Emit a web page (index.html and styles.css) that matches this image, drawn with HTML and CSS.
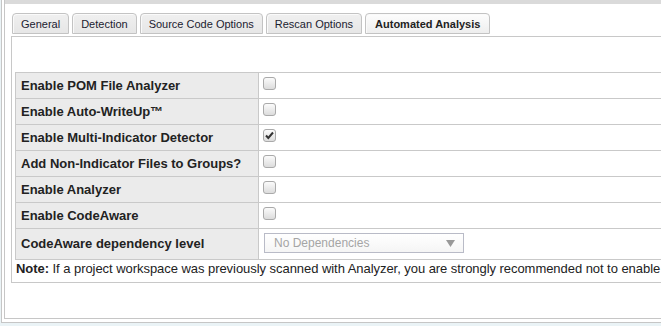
FILE: index.html
```html
<!DOCTYPE html>
<html>

<head>
	<meta http-equiv="Content-Type" content="text/html; charset=utf-8" />
	<title>Automated Analysis</title>
	<link rel="stylesheet" href="styles.css">
</head>

<body>
	<div class="frame">
		<div class="inner">
			<div class="topband"></div>
			<ul class="tabs">
				<li>General</li>
				<li>Detection</li>
				<li>Source Code Options</li>
				<li>Rescan Options</li>
				<li class="active">Automated Analysis</li>
			</ul>
			<div class="panel">
				<table class="opts">
					<tr>
						<th>Enable POM File Analyzer</th>
						<td><span class="cb"></span></td>
					</tr>
					<tr>
						<th>Enable Auto-WriteUp™</th>
						<td><span class="cb"></span></td>
					</tr>
					<tr>
						<th>Enable Multi-Indicator Detector</th>
						<td><span class="cb"><svg width="11" height="11" viewBox="0 0 11 11"><path d="M2 5.5 L4.3 8 L9 2.5" fill="none" stroke="#333" stroke-width="2" /></svg></span></td>
					</tr>
					<tr>
						<th>Add Non-Indicator Files to Groups?</th>
						<td><span class="cb"></span></td>
					</tr>
					<tr>
						<th>Enable Analyzer</th>
						<td><span class="cb"></span></td>
					</tr>
					<tr>
						<th>Enable CodeAware</th>
						<td><span class="cb"></span></td>
					</tr>
					<tr class="last">
						<th>CodeAware dependency level</th>
						<td>
							<div class="select">
								<span>No Dependencies</span>
								<svg width="9" height="7" viewBox="0 0 9 7"><path d="M0 0 H9 L4.5 7 Z" fill="#999" /></svg>
							</div>
						</td>
					</tr>
				</table>
				<p class="note"><b>Note:</b> If a project workspace was previously scanned with Analyzer, you are strongly recommended not to enable</p>
			</div>
		</div>
	</div>
</body>

</html>
```

FILE: styles.css
```css
html,
body {
	margin: 0;
	padding: 0;
	overflow: hidden;
}

body {
	background: #eaf3f6;
	color: #222;
	font: 13px Arial, "Liberation Sans", sans-serif;
}

ul,
li,
p {
	margin: 0;
	padding: 0;
}

ul {
	list-style-type: none;
}

.frame {
	width: 1000px;
	margin-left: 1px;
	padding: 0 0 3px 2px;
	background: #fff;
	border-left: 1px solid #c6c6c6;
	border-bottom: 1px solid #c6c6c6;
}

.inner {
	border-left: 1px solid #c6c6c6;
	border-bottom: 1px solid #c6c6c6;
	padding-bottom: 35px;
}

.topband {
	height: 4px;
	background: #dadada;
}

.tabs {
	display: flex;
	gap: 3px;
	padding: 9px 0 0 7px;
}

.tabs li {
	height: 15px;
	line-height: 15px;
	padding: 4px 8px 0;
	font: 11px "Liberation Sans", Arial, sans-serif;
	color: #1b2130;
	background: linear-gradient(#f0f0f0, #e6e6e6);
	border: 1px solid #c3c3c3;
	border-radius: 4px 4px 0 0;
	box-shadow: inset 1px 1px 0 #fafafa;
}

.tabs li.active {
	padding: 4px 9px 0;
	font-weight: bold;
	color: #222;
	background: linear-gradient(#fdfdfd, #eeeeee);
}

.panel {
	margin: 2px 0 0 6px;
	padding: 35px 0 6px 0;
	border: 1px solid #c8c8c8;
	border-right: none;
}

.opts {
	width: 900px;
	margin-left: 3px;
	border-collapse: collapse;
	border: 1px solid #c9c9c9;
}

.opts th,
.opts td {
	border: 1px solid #c9c9c9;
	padding: 0;
}

.opts th {
	width: 232px;
	height: 25px;
	padding: 0 5px;
	text-align: left;
	font-weight: bold;
	background: #ebebeb;
}

.opts td {
	vertical-align: top;
	padding: 4px 0 0 4px;
}

.opts tr.last th {
	height: 29px;
	padding-bottom: 1px;
}

.opts tr.last td {
	padding-left: 5px;
}

.cb {
	display: block;
	width: 11px;
	height: 11px;
	border: 1px solid #aaaaaa;
	border-radius: 3px;
	background: linear-gradient(#fbfbfb, #dcdcdc);
}

.cb svg {
	display: block;
}

.select {
	display: flex;
	align-items: center;
	justify-content: space-between;
	box-sizing: border-box;
	width: 200px;
	height: 20px;
	padding: 0 8px 0 9px;
	border: 1px solid #b9bbc7;
	background: linear-gradient(#ffffff, #f5f5f5);
	color: #a5a5a5;
	font-size: 12px;
}

.note {
	padding: 1px 0 0 4px;
	white-space: nowrap;
	letter-spacing: -0.05px;
}
```
